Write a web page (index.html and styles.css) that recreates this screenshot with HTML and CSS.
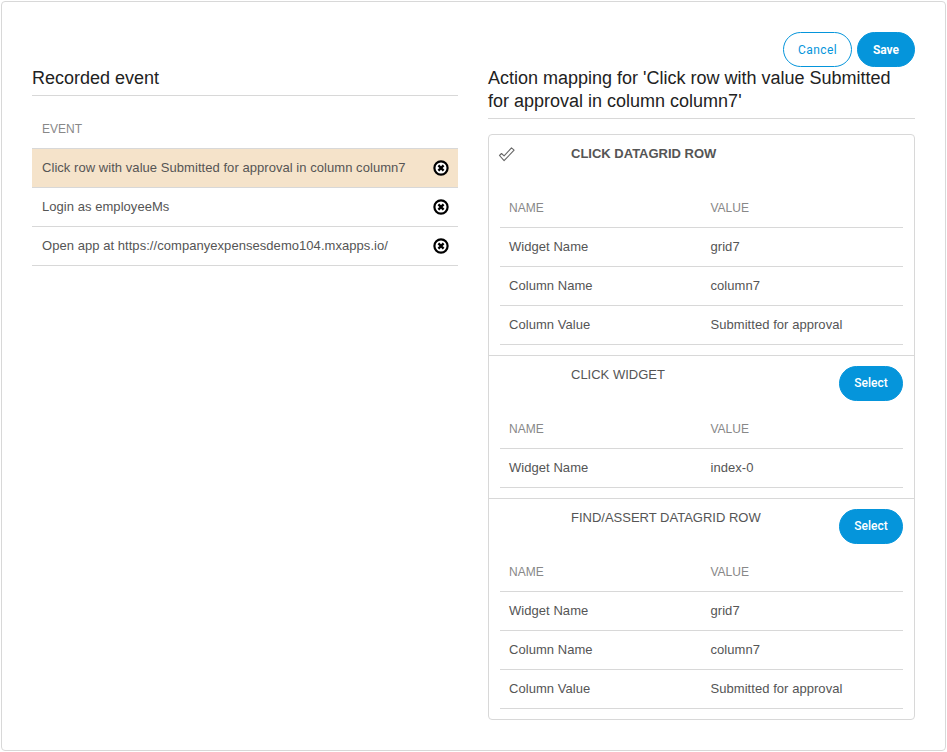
FILE: index.html
```html
<!DOCTYPE html>
<html lang="en">
<head>
  <meta charset="UTF-8">
  <title>Recorded event</title>
  <link rel="stylesheet" href="styles.css">
</head>
<body>

<svg class="icon-defs" width="0" height="0" aria-hidden="true">
  <symbol id="remove" viewBox="0 0 16 16">
    <circle cx="8" cy="8" r="6.6" fill="#fff" stroke="#000" stroke-width="2.2"/>
    <path d="M5.4 5.4l5.2 5.2M10.6 5.4l-5.2 5.2" fill="none" stroke="#000" stroke-width="2.3"/>
  </symbol>
</svg>

<div class="frame">
  <div class="toolbar">
    <button class="btn btn-outline" type="button">Cancel</button>
    <button class="btn btn-primary" type="button">Save</button>
  </div>

  <div class="columns">
    <div class="column">
      <h2 class="heading">Recorded event</h2>
      <table class="grid event-grid">
        <thead>
          <tr><th>Event</th><th class="remove-cell"></th></tr>
        </thead>
        <tbody>
          <tr class="selected">
            <td>Click row with value Submitted for approval in column column7</td>
            <td class="remove-cell"><svg class="remove-icon"><use href="#remove"/></svg></td>
          </tr>
          <tr>
            <td>Login as employeeMs</td>
            <td class="remove-cell"><svg class="remove-icon"><use href="#remove"/></svg></td>
          </tr>
          <tr>
            <td>Open app at https://companyexpensesdemo104.mxapps.io/</td>
            <td class="remove-cell"><svg class="remove-icon"><use href="#remove"/></svg></td>
          </tr>
        </tbody>
      </table>
    </div>

    <div class="column">
      <h2 class="heading">Action mapping for 'Click row with value Submitted for approval in column column7'</h2>

      <div class="card">
        <section class="action">
          <div class="action-head">
            <div class="action-mark">
              <svg class="check-icon" viewBox="0 0 18 16">
                <path d="M1.5 9.5l2-2 2.6 2.4 7.4-8 2.6 2.2-10 10.6z" fill="#fff" stroke="#666" stroke-width="1.1" stroke-linejoin="round"/>
              </svg>
            </div>
            <div class="action-title active">CLICK DATAGRID ROW</div>
          </div>
          <table class="grid">
            <thead><tr><th>Name</th><th>Value</th></tr></thead>
            <tbody>
              <tr><td>Widget Name</td><td>grid7</td></tr>
              <tr><td>Column Name</td><td>column7</td></tr>
              <tr><td>Column Value</td><td>Submitted for approval</td></tr>
            </tbody>
          </table>
        </section>

        <section class="action">
          <div class="action-head has-select">
            <div class="action-mark"></div>
            <div class="action-title">CLICK WIDGET</div>
            <button class="btn btn-primary btn-select" type="button">Select</button>
          </div>
          <table class="grid">
            <thead><tr><th>Name</th><th>Value</th></tr></thead>
            <tbody>
              <tr><td>Widget Name</td><td>index-0</td></tr>
            </tbody>
          </table>
        </section>

        <section class="action">
          <div class="action-head has-select">
            <div class="action-mark"></div>
            <div class="action-title">FIND/ASSERT DATAGRID ROW</div>
            <button class="btn btn-primary btn-select" type="button">Select</button>
          </div>
          <table class="grid">
            <thead><tr><th>Name</th><th>Value</th></tr></thead>
            <tbody>
              <tr><td>Widget Name</td><td>grid7</td></tr>
              <tr><td>Column Name</td><td>column7</td></tr>
              <tr><td>Column Value</td><td>Submitted for approval</td></tr>
            </tbody>
          </table>
        </section>
      </div>
    </div>
  </div>
</div>

</body>
</html>
```

FILE: styles.css
```css
* {
  box-sizing: border-box;
}
body {
  margin: 0;
  font-family: "Liberation Sans", Arial, sans-serif;
  font-size: 13px;
  color: #555;
  background: #fff;
}
.icon-defs {
  position: absolute;
}
.frame {
  margin: 1px;
  height: 750px;
  padding: 30px;
  border: 1px solid #d8d8d8;
  border-radius: 4px;
}
.toolbar {
  display: flex;
  justify-content: flex-end;
  gap: 5px;
  height: 35px;
}
.btn {
  height: 35px;
  border-radius: 18px;
  font-family: Roboto, sans-serif;
  font-size: 12px;
}
.btn-outline {
  width: 69px;
  background: #fff;
  border: 1px solid #0595db;
  color: #0595db;
  letter-spacing: 0.4px;
}
.btn-primary {
  width: 58px;
  background: #0595db;
  border: 1px solid #0595db;
  color: #fff;
  font-weight: bold;
}
.btn-select {
  width: 64px;
  margin-left: auto;
  font-weight: 500;
}
.columns {
  display: grid;
  grid-template-columns: 426px 427px;
  gap: 30px;
}
.heading {
  margin: 0;
  padding-bottom: 5px;
  border-bottom: 1px solid #d8d8d8;
  font-size: 18px;
  font-weight: normal;
  line-height: 23px;
  color: #222;
}
.grid {
  width: 100%;
  border-collapse: collapse;
  table-layout: fixed;
}
.grid th,
.grid td {
  height: 39px;
  padding: 0 9px;
  border-bottom: 1px solid #d8d8d8;
  text-align: left;
}
.grid td {
  letter-spacing: 0.05px;
}
.grid th {
  padding-top: 1px;
  font-size: 12px;
  font-weight: normal;
  color: #888;
  text-transform: uppercase;
}
.event-grid {
  margin-top: 13px;
}
.event-grid th,
.event-grid td {
  padding-left: 10px;
}
.selected td {
  background: #f5e3ca;
}
.remove-cell {
  width: 34px;
}
.event-grid .remove-cell {
  padding: 0 9px 0 9px;
}
.remove-icon {
  display: block;
  width: 16px;
  height: 16px;
}
.card {
  margin-top: 15px;
  border: 1px solid #d8d8d8;
  border-radius: 4px;
}
.action {
  padding: 10px 11px;
  border-bottom: 1px solid #d8d8d8;
}
.action:last-child {
  border-bottom: 0;
}
.action-head {
  display: flex;
  height: 35px;
  margin-bottom: 8px;
}
.action-head.has-select {
  margin-bottom: 8.5px;
}
.action-mark {
  flex: none;
  width: 71px;
}
.check-icon {
  display: block;
  width: 18px;
  height: 16px;
  margin: 1px 0 0 -2px;
}
.action-title {
  line-height: 18px;
}
.action-title.active {
  font-weight: bold;
}
```
